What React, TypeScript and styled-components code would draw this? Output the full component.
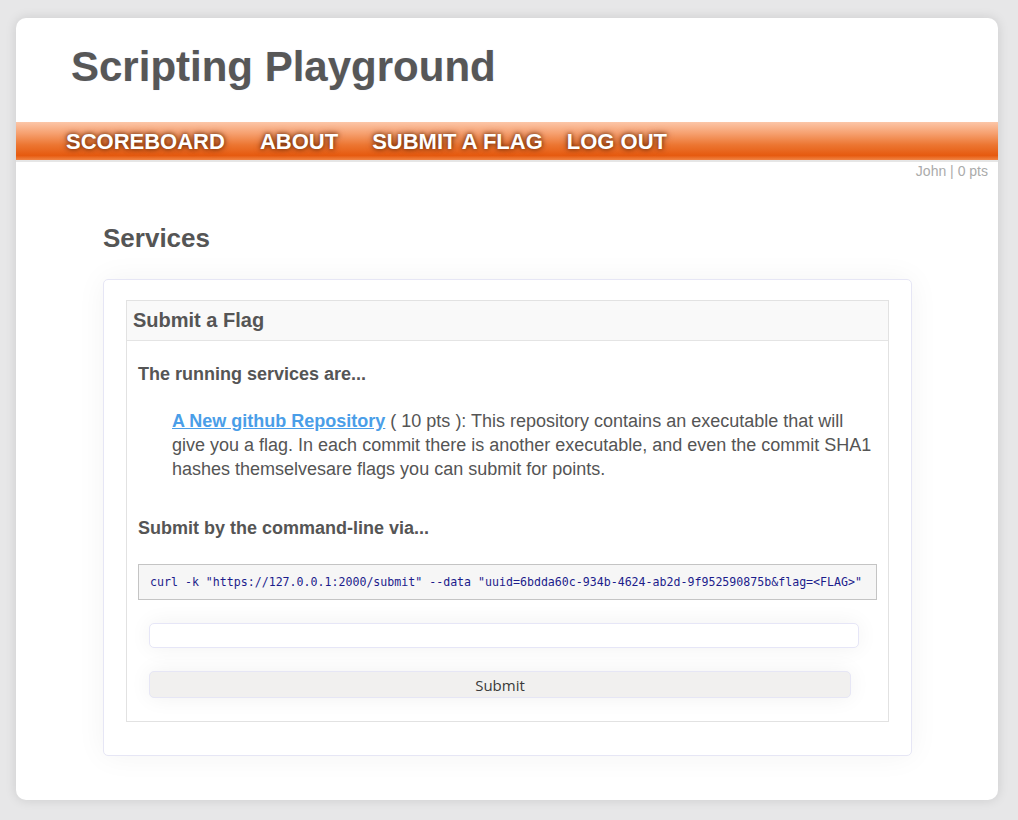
import React from "react";
import styled, { createGlobalStyle } from "styled-components";

const Global = createGlobalStyle`
  html, body { margin: 0; padding: 0; }
  body {
    background: #e7e7e8;
    font-family: "Liberation Sans", Arial, sans-serif;
    color: #555;
  }
`;

const Viewport = styled.div`
  padding: 18px 20px 20px 16px;
  min-height: 782px;
`;

const PageCard = styled.div`
  background: #fff;
  border-radius: 10px;
  height: 782px;
  box-shadow: 0 0 12px rgba(0, 0, 0, 0.12);
  overflow: hidden;
  display: flex;
  flex-direction: column;
`;

const SiteTitle = styled.h1`
  margin: 25px 0 31px 55px;
  font-size: 42px;
  line-height: 48px;
  font-weight: bold;
  color: #575757;
  text-shadow: 0 0 1px rgba(120, 140, 200, 0.35);
`;

const NavBar = styled.nav`
  height: 38px;
  display: flex;
  align-items: center;
  padding-left: 34px;
  background: linear-gradient(
    to bottom,
    #fcc6a8 0%,
    #f6a06f 30%,
    #ec7632 60%,
    #e65a0f 88%,
    #f08445 100%
  );
  border-bottom: 2px solid #e6e6e6;
`;

const NavItem = styled.a<{ $space: number }>`
  font-size: 22px;
  font-weight: bold;
  text-transform: uppercase;
  color: #fff;
  text-decoration: none;
  text-shadow: 0 0 4px #6b2a05, 0 0 7px rgba(90, 30, 0, 0.6);
  margin: 1px ${(p) => p.$space}px 0 16px;
  line-height: 24px;
`;

const UserLine = styled.div`
  text-align: right;
  padding-right: 10px;
  font-size: 14px;
  line-height: 18px;
  color: #ababab;
`;

const Content = styled.main`
  padding: 0 86px 0 87px;
`;

const SectionTitle = styled.h2`
  margin: 43px 0 26px 0;
  font-size: 26px;
  line-height: 30px;
  font-weight: bold;
  color: #555;
`;

const OuterCard = styled.section`
  border: 1px solid #e6e6f5;
  border-radius: 5px;
  padding: 20px 22px 33px 22px;
  box-shadow: 0 0 30px rgba(0, 0, 0, 0.05);
  background: #fff;
`;

const Panel = styled.div`
  border: 1px solid #e2e2e2;
`;

const PanelHeader = styled.div`
  background: #f9f9f9;
  border-bottom: 1px solid #e4e4e4;
  height: 39px;
  display: flex;
  align-items: center;
  padding-left: 6px;
  font-size: 20px;
  font-weight: bold;
  color: #555;
`;

const PanelBody = styled.div`
  padding: 22px 11px 23px 11px;
`;

const SubHeading = styled.h3`
  margin: 0;
  font-size: 18px;
  line-height: 22px;
  font-weight: bold;
  color: #555;
`;

const ServiceList = styled.ul`
  list-style: none;
  margin: 24px 0 36px 0;
  padding: 0 0 0 34px;
`;

const ServiceItem = styled.li`
  font-size: 18px;
  line-height: 24px;
  color: #555;
`;

const ServiceLink = styled.a`
  color: #4a9ee8;
  font-weight: bold;
  text-decoration: underline;
`;

const CodeBlock = styled.pre`
  margin: 25px 0 0 0;
  padding: 10px 11px;
  border: 1px solid #c4c4c4;
  background: #f6f6f6;
  font-family: "DejaVu Sans Mono", monospace;
  font-size: 11.6px;
  line-height: 14px;
  color: #1c1c8c;
  white-space: pre;
  overflow: hidden;
`;

const Form = styled.form`
  display: flex;
  flex-direction: column;
  align-items: flex-start;
  padding: 23px 11px 0 11px;
  gap: 23px;
`;

const FlagInput = styled.input`
  box-sizing: border-box;
  width: 710px;
  height: 25px;
  border: 1px solid #e6e6f7;
  border-radius: 5px;
  background: #fff;
  box-shadow: 0 0 22px rgba(0, 0, 0, 0.06);
  outline: none;
`;

const SubmitButton = styled.button`
  box-sizing: border-box;
  width: 702px;
  height: 27px;
  border: 1px solid #e6e6f5;
  border-radius: 5px;
  background: #f1f0ef;
  box-shadow: 0 0 22px rgba(0, 0, 0, 0.06);
  font-family: "Open Sans", sans-serif;
  font-size: 15px;
  color: #3a3a3a;
  padding: 0;
`;

const navItems = [
  { label: "Scoreboard", space: 19 },
  { label: "About", space: 18 },
  { label: "Submit a Flag", space: 8 },
  { label: "Log out", space: 0 },
];

export default function App() {
  return (
    <>
      <Global />
      <Viewport>
        <PageCard>
          <SiteTitle>Scripting Playground</SiteTitle>
          <NavBar>
            {navItems.map((n) => (
              <NavItem key={n.label} href="#" $space={n.space}>
                {n.label}
              </NavItem>
            ))}
          </NavBar>
          <UserLine>John | 0 pts</UserLine>
          <Content>
            <SectionTitle>Services</SectionTitle>
            <OuterCard>
              <Panel>
                <PanelHeader>Submit a Flag</PanelHeader>
                <PanelBody>
                  <SubHeading>The running services are...</SubHeading>
                  <ServiceList>
                    <ServiceItem>
                      <ServiceLink href="#">A New github Repository</ServiceLink> ( 10 pts ): This
                      repository contains an executable that will give you a flag. In each commit
                      there is another executable, and even the commit SHA1 hashes themselvesare
                      flags you can submit for points.
                    </ServiceItem>
                  </ServiceList>
                  <SubHeading>Submit by the command-line via...</SubHeading>
                  <CodeBlock>
                    curl -k "https://127.0.0.1:2000/submit" --data
                    "uuid=6bdda60c-934b-4624-ab2d-9f952590875b&amp;flag=&lt;FLAG&gt;"
                  </CodeBlock>
                  <Form onSubmit={(e) => e.preventDefault()}>
                    <FlagInput type="text" />
                    <SubmitButton type="submit">Submit</SubmitButton>
                  </Form>
                </PanelBody>
              </Panel>
            </OuterCard>
          </Content>
        </PageCard>
      </Viewport>
    </>
  );
}
